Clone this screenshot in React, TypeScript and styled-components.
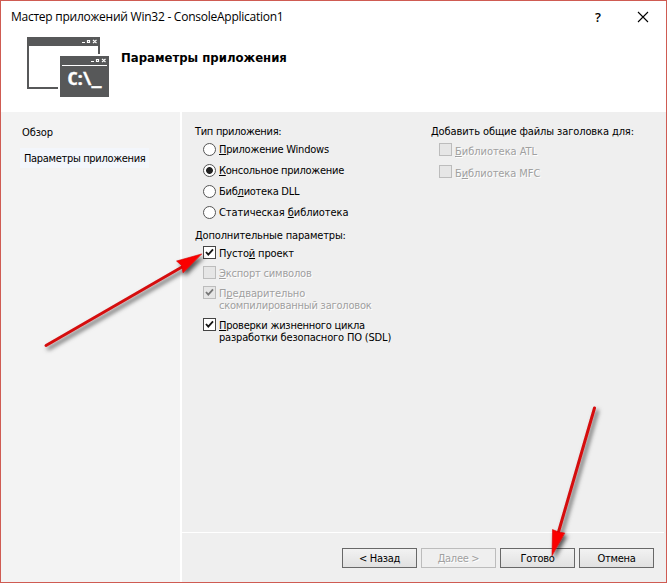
import React from "react";
import styled, { createGlobalStyle } from "styled-components";

const GlobalStyle = createGlobalStyle`
  * { box-sizing: border-box; }
  body {
    margin: 0;
    overflow: hidden;
    background: #fff;
    color: #000;
    font: 11px/12px "DejaVu Sans Condensed", "DejaVu Sans", sans-serif;
    font-stretch: condensed;
  }
`;

const Dialog = styled.div`
  position: relative;
  display: flex;
  flex-direction: column;
  width: 667px;
  height: 583px;
  border: 1px solid #cf5b52;
  background: #fff;
`;

const TitleBar = styled.header`
  display: flex;
  align-items: center;
  height: 31px;
  padding: 0 17px 0 10px;
  font: 12px/16px "Open Sans", sans-serif;
`;

const Title = styled.span<{ $spacing: number }>`
  flex: 1;
  white-space: nowrap;
  letter-spacing: ${(p) => p.$spacing}px;
`;

const HelpMark = styled.span`
  width: 8px;
  margin-right: 34px;
  font: 600 13px/16px "Open Sans", sans-serif;
`;

const Banner = styled.div`
  display: flex;
  height: 80px;
  padding: 5px 0 0 25px;
`;

const Heading = styled.h1`
  margin: 13px 0 0 11px;
  font: bold 13px/16px "DejaVu Sans Condensed", "DejaVu Sans", sans-serif;
  font-stretch: condensed;
  white-space: nowrap;
`;

const Body = styled.div`
  display: flex;
  flex: 1;
  min-height: 0;
`;

const Sidebar = styled.nav`
  display: flex;
  flex-direction: column;
  align-items: flex-start;
  width: 181px;
  padding: 11px 0 0 19px;
  border-right: 2px solid #fff;
  background: #f3f3f3;
`;

const NavItem = styled.a<{ $active?: boolean }>`
  height: 20px;
  margin-bottom: 5px;
  padding: ${(p) => (p.$active ? "5px 4px 0 4px" : "4px 2px 0")};
  background: ${(p) => (p.$active ? "#f3f6fb" : "transparent")};
`;

const Main = styled.main`
  display: flex;
  flex: 1;
  flex-direction: column;
  background: #efefef;
`;

const Options = styled.div`
  display: grid;
  grid-template-columns: 236px 1fr;
  flex: 1;
  padding: 14px 0 0 13px;
`;

const Group = styled.div`
  display: flex;
  flex-direction: column;
`;

const GroupLabel = styled.div<{ $height: number }>`
  height: ${(p) => p.$height}px;
  white-space: nowrap;
`;

const Row = styled.label<{ $height: number; $disabled?: boolean }>`
  display: flex;
  align-items: flex-start;
  gap: 3px;
  height: ${(p) => p.$height}px;
  padding-left: 8px;
  color: ${(p) => (p.$disabled ? "#a0a0a0" : "#000")};
  text-shadow: ${(p) => (p.$disabled ? "1px 1px 0 #fff" : "none")};
`;

const Lines = styled.span`
  display: flex;
  flex-direction: column;
`;

const Text = styled.span<{ $spacing?: number; $top?: number }>`
  padding-top: ${(p) => p.$top ?? 0}px;
  letter-spacing: ${(p) => p.$spacing ?? 0}px;
  white-space: pre;

  u {
    text-decoration-thickness: 1px;
    text-underline-offset: 1px;
    text-decoration-skip-ink: none;
  }
`;

const RadioMark = styled.span<{ $on?: boolean }>`
  flex: none;
  width: 13px;
  height: 13px;
  border: 1px solid #555;
  border-radius: 50%;
  background: ${(p) => (p.$on ? "radial-gradient(circle, #222 3px, #fff 3.8px)" : "#fff")};
`;

const CheckMark = styled.span<{ $disabled?: boolean }>`
  flex: none;
  display: flex;
  width: 13px;
  height: 13px;
  border: 1px solid ${(p) => (p.$disabled ? "#bcbcbc" : "#444")};
  background: ${(p) => (p.$disabled ? "#e6e6e6" : "#fff")};
  color: ${(p) => (p.$disabled ? "#777" : "#151515")};
`;

const Footer = styled.footer`
  display: flex;
  justify-content: flex-end;
  gap: 4px;
  height: 50px;
  margin-right: 2px;
  padding: 15px 10px 0 0;
  border-top: 1px solid #fff;
`;

const Button = styled.button`
  width: 75px;
  height: 20px;
  padding: 2px 0 0;
  border: 1px solid #686868;
  background: linear-gradient(#f2f2f2, #e1e1e1);
  color: #000;
  font: inherit;
  letter-spacing: -0.3px;

  &:disabled {
    border-color: #bcbcbc;
    background: #efefef;
    color: #a0a0a0;
    text-shadow: 1px 1px 0 #fff;
  }
`;

const Pointers = styled.svg`
  position: absolute;
  left: -1px;
  top: -1px;
  pointer-events: none;
`;

const ConsoleArt = styled.svg`
  flex: none;
`;

function Check({ on, disabled }: { on?: boolean; disabled?: boolean }) {
  return (
    <CheckMark $disabled={disabled}>
      {on && (
        <svg width="11" height="11" viewBox="0 0 11 11">
          <path d="M2 5 4.3 7.6 9 2.4" fill="none" stroke="currentColor" strokeWidth="1.8" />
        </svg>
      )}
    </CheckMark>
  );
}

function ConsoleIcon() {
  return (
    <ConsoleArt width="84" height="62" viewBox="0 0 84 62">
      <path d="M1 0H74V17H72V9H3V50H32V52H1Z" fill="#575859" />
      <path d="M34 19H83V60H34Z" fill="#575859" />
      <path d="M36 28.5H81" stroke="#fff" />
      <g fill="none" stroke="#fff" strokeWidth="1.2">
        <path d="M56 5.5h3M61.5 3.5h2v2h-2zM67 3l3.5 3M70.5 3 67 6" />
        <path d="M65 24.5h3M70.5 22.5h2v2h-2zM76 22l3.5 3M79.5 22 76 25" />
      </g>
      <text x="41.5" y="48.3" fill="#fff" stroke="#fff" strokeWidth=".3" fontFamily="Open Sans" fontWeight="700" fontSize="18" textLength="34" lengthAdjust="spacingAndGlyphs">C:\_</text>
    </ConsoleArt>
  );
}

function Arrows() {
  return (
    <Pointers width="667" height="583" viewBox="0 0 667 583">
      <defs>
        <filter id="shade" x="-20%" y="-20%" width="150%" height="150%">
          <feDropShadow dx="2.5" dy="3" stdDeviation="2" floodColor="#000" floodOpacity=".65" />
        </filter>
      </defs>
      <g filter="url(#shade)" strokeLinecap="round">
        <path d="M46 345.5 182 267" stroke="#d50b10" strokeWidth="3" />
        <path d="M201.5 254 176.5 261 181.5 265.5 183 272.5Z" fill="#fa0000" stroke="#d50000" strokeWidth=".6" />
      </g>
      <g filter="url(#shade)" strokeLinecap="round">
        <path d="M594.5 408 558.5 532" stroke="#d50b10" strokeWidth="3" />
        <path d="M552 555.5 552.5 529.5 558.5 532 564.5 533Z" fill="#fa0000" stroke="#d50000" strokeWidth=".6" />
      </g>
    </Pointers>
  );
}

export default function App() {
  return (
    <>
      <GlobalStyle />
      <Dialog>
        <TitleBar>
          <Title $spacing={-0.25}>Мастер приложений Win32 - ConsoleApplication1</Title>
          <HelpMark>?</HelpMark>
          <svg width="12" height="12" viewBox="0 0 12 12">
            <path d="M1 1 11 11M11 1 1 11" stroke="#000" strokeWidth="1.1" />
          </svg>
        </TitleBar>
        <Banner>
          <ConsoleIcon />
          <Heading>Параметры приложения</Heading>
        </Banner>
        <Body>
          <Sidebar>
            <NavItem><Text $spacing={-0.1}>Обзор</Text></NavItem>
            <NavItem $active><Text $spacing={-0.32}>Параметры приложения</Text></NavItem>
          </Sidebar>
          <Main>
            <Options>
              <Group>
                <GroupLabel $height={17}><Text $spacing={-0.3}>Тип приложения:</Text></GroupLabel>
                <Row $height={21}><RadioMark /><Text $spacing={-0.22} $top={1}><u>П</u>риложение Windows</Text></Row>
                <Row $height={21}><RadioMark $on /><Text $spacing={-0.26} $top={1}><u>К</u>онсольное приложение</Text></Row>
                <Row $height={21}><RadioMark /><Text $spacing={-0.26} $top={1}>Биб<u>л</u>иотека DLL</Text></Row>
                <Row $height={24}><RadioMark /><Text $spacing={-0.06} $top={1}>Статическая <u>б</u>иблиотека</Text></Row>
                <GroupLabel $height={16}><Text $spacing={-0.16}>Дополнительные параметры:</Text></GroupLabel>
                <Row $height={20}><Check on /><Text $spacing={-0.15} $top={2}>Пусто<u>й</u> проект</Text></Row>
                <Row $height={20} $disabled><Check disabled /><Text $spacing={-0.18} $top={2}><u>Э</u>кспорт символов</Text></Row>
                <Row $height={32} $disabled>
                  <Check on disabled />
                  <Lines>
                    <Text $spacing={-0.12} $top={2}>П<u>р</u>едварительно</Text>
                    <Text $spacing={-0.21}>скомпилированный заголовок</Text>
                  </Lines>
                </Row>
                <Row $height={30}>
                  <Check on />
                  <Lines>
                    <Text $spacing={-0.23} $top={2}><u>П</u>роверки жизненного цикла</Text>
                    <Text $spacing={-0.17}>разработки безопасного ПО (SDL)</Text>
                  </Lines>
                </Row>
              </Group>
              <Group>
                <GroupLabel $height={17}><Text $spacing={-0.11}>Добавить общие файлы заголовка для:</Text></GroupLabel>
                <Row $height={22} $disabled><Check disabled /><Text $spacing={-0.04} $top={3}><u>Б</u>иблиотека ATL</Text></Row>
                <Row $height={22} $disabled><Check disabled /><Text $spacing={-0.08} $top={3}>Б<u>и</u>блиотека MFC</Text></Row>
              </Group>
            </Options>
            <Footer>
              <Button>&lt; Назад</Button>
              <Button disabled>Далее &gt;</Button>
              <Button>Готово</Button>
              <Button>Отмена</Button>
            </Footer>
          </Main>
        </Body>
        <Arrows />
      </Dialog>
    </>
  );
}
